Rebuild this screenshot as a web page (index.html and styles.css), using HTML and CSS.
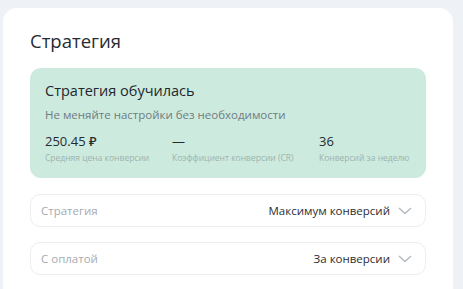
FILE: index.html
```html
<!DOCTYPE html>
<html lang="ru">
<head>
<meta charset="utf-8">
<link rel="stylesheet" href="styles.css">
</head>
<body>
<div class="card">
  <h2 class="title">Стратегия</h2>
  <div class="status">
    <div class="status-title">Стратегия обучилась</div>
    <div class="status-sub">Не меняйте настройки без необходимости</div>
    <div class="stats">
      <div class="stat s1">
        <div class="stat-val">250.45 ₽</div>
        <div class="stat-label">Средняя цена конверсии</div>
      </div>
      <div class="stat s2">
        <div class="stat-val">—</div>
        <div class="stat-label">Коэффициент конверсии (CR)</div>
      </div>
      <div class="stat s3">
        <div class="stat-val">36</div>
        <div class="stat-label">Конверсий за неделю</div>
      </div>
    </div>
  </div>
  <div class="select">
    <span class="select-label">Стратегия</span>
    <span class="select-value">Максимум конверсий</span>
    <svg class="chev" width="14" height="8" viewBox="0 0 14 8"><path d="M1 1l6 5.5L13 1" fill="none" stroke="#b3b8bf" stroke-width="1.3"/></svg>
  </div>
  <div class="select">
    <span class="select-label">С оплатой</span>
    <span class="select-value">За конверсии</span>
    <svg class="chev" width="14" height="8" viewBox="0 0 14 8"><path d="M1 1l6 5.5L13 1" fill="none" stroke="#b3b8bf" stroke-width="1.3"/></svg>
  </div>
</div>
</body>
</html>
```
FILE: styles.css
```css
html, body { margin: 0; padding: 0; }
body {
  background: #eef1f5;
  font-family: "Open Sans", "Noto Sans", sans-serif;
  color: #21252b;
  width: 463px;
  height: 289px;
  overflow: hidden;
}
.card {
  margin: 8px 0 0 3px;
  width: 450px;
  height: 320px;
  background: #fff;
  border-radius: 14px;
  padding: 22px 27px 0 27px;
  box-sizing: border-box;
}
.title {
  margin: 0;
  font-size: 18.5px;
  font-weight: 400;
  line-height: 22px;
  color: #262b33;
}
.status {
  margin-top: 16px;
  background: #cdeadf;
  border-radius: 11px;
  height: 110px;
  box-sizing: border-box;
  padding: 14px 15px 0 15px;
}
.status-title {
  font-size: 14.5px;
  line-height: 18px;
  color: #22272d;
}
.status-sub {
  margin-top: 7px;
  font-size: 11.5px;
  line-height: 16px;
  color: #6e7c80;
}
.stats {
  display: grid;
  grid-template-columns: 127px 147px auto;
  margin-top: 10px;
}
.stat-val {
  font-size: 13px;
  font-weight: 500;
  line-height: 16px;
  color: #262b30;
}
.stat-label {
  margin-top: 2px;
  font-size: 8.5px;
  line-height: 13px;
  color: #9db3ad;
}
.select {
  margin-top: 16px;
  height: 33px;
  box-sizing: border-box;
  border: 1px solid #ebedef;
  border-radius: 10px;
  display: flex;
  align-items: center;
  padding: 0 13px 0 10px;
  font-size: 11.5px;
}
.select + .select { margin-top: 15px; }
.select-label { color: #a7abb1; flex: 1; }
.select-value { color: #2a2e33; margin-right: 8px; }
.chev { display: block; }
```
